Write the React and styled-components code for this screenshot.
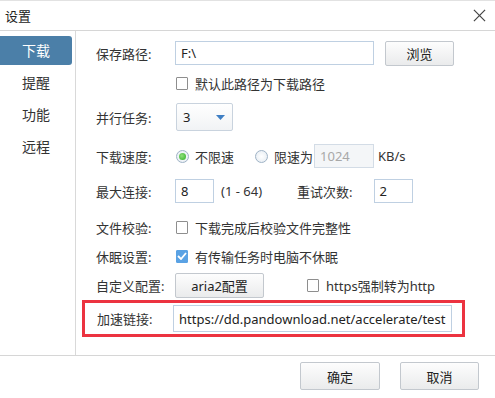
import styled, { createGlobalStyle } from "styled-components"

const GlobalStyle = createGlobalStyle`
  html, body {
    margin: 0;
    padding: 0;
    background: #fff;
  }
  body {
    font-family: "Noto Sans", "Noto Sans CJK SC", sans-serif;
    font-size: 13px;
    color: #333;
  }
  * {
    box-sizing: border-box;
  }
`

const menu = ["下载", "提醒", "功能", "远程"]

const App = () => {
  return (
    <>
      <GlobalStyle />
      <WindowSt>
        <TitleBarSt>
          <span>设置</span>
          <CloseSt viewBox="0 0 14 14">
            <path d="M1 1 L13 13 M13 1 L1 13" stroke="#444" strokeWidth="1.3" />
          </CloseSt>
        </TitleBarSt>
        <BodySt>
          <SideSt>
            {menu.map((item, idx) => (
              <MenuItemSt key={item} $active={idx === 0}>
                <span>{item}</span>
              </MenuItemSt>
            ))}
          </SideSt>
          <MainSt>
            <RowSt $top={10} $h={24}>
              <LabelSt>保存路径:</LabelSt>
              <InputSt $w={199}>F:\</InputSt>
              <ButtonSt $w={69} $ml={11}>浏览</ButtonSt>
            </RowSt>
            <RowSt $top={9} $h={18}>
              <LabelSt />
              <Check />
              <TextSt>默认此路径为下载路径</TextSt>
            </RowSt>
            <RowSt $top={11} $h={28}>
              <LabelSt>并行任务:</LabelSt>
              <SelectSt>
                <span>3</span>
                <svg width="9" height="5" viewBox="0 0 9 5">
                  <path d="M0 0 H9 L4.5 5 Z" fill="#3f7fc4" />
                </svg>
              </SelectSt>
            </RowSt>
            <RowSt $top={13} $h={24}>
              <LabelSt>下载速度:</LabelSt>
              <Radio checked />
              <TextSt>不限速</TextSt>
              <Radio $ml={20} />
              <TextSt>限速为</TextSt>
              <InputSt $w={60} $ml={1} $disabled>1024</InputSt>
              <TextSt $ml={4}>KB/s</TextSt>
            </RowSt>
            <RowSt $top={11} $h={24}>
              <LabelSt>最大连接:</LabelSt>
              <InputSt $w={39}>8</InputSt>
              <TextSt $ml={7}>(1 - 64)</TextSt>
              <TextSt $ml={35}>重试次数:</TextSt>
              <InputSt $w={39} $ml={21}>2</InputSt>
            </RowSt>
            <RowSt $top={15} $h={18}>
              <LabelSt>文件校验:</LabelSt>
              <Check />
              <TextSt>下载完成后校验文件完整性</TextSt>
            </RowSt>
            <RowSt $top={11} $h={18}>
              <LabelSt>休眠设置:</LabelSt>
              <Check checked />
              <TextSt>有传输任务时电脑不休眠</TextSt>
            </RowSt>
            <RowSt $top={7} $h={26}>
              <LabelSt>自定义配置:</LabelSt>
              <ButtonSt $w={89}>aria2配置</ButtonSt>
              <Check $ml={42} />
              <TextSt>https强制转为http</TextSt>
            </RowSt>
            <HighlightSt>
              <LabelSt $w={76}>加速链接:</LabelSt>
              <InputSt $w={279} $h={27}>https://dd.pandownload.net/accelerate/test</InputSt>
            </HighlightSt>
          </MainSt>
        </BodySt>
        <FooterSt>
          <ButtonSt $w={80} $h={28}>确定</ButtonSt>
          <ButtonSt $w={79} $h={28} $ml={20}>取消</ButtonSt>
        </FooterSt>
      </WindowSt>
    </>
  )
}

const Check = ({ checked, $ml }) => (
  <CheckSt $checked={checked} $ml={$ml}>
    {checked && (
      <svg width="10" height="8" viewBox="0 0 10 8">
        <path d="M1 4 L4 7 L9 1" stroke="#fff" strokeWidth="1.8" fill="none" />
      </svg>
    )}
  </CheckSt>
)

const Radio = ({ checked, $ml }) => (
  <RadioSt $checked={checked} $ml={$ml}>
    {checked && <DotSt />}
  </RadioSt>
)

const WindowSt = styled.div`
  width: 495px;
  height: 398px;
  display: flex;
  flex-direction: column;
  border-top: 1px solid #e2e2e2;
  background: #fff;
`
const TitleBarSt = styled.div`
  height: 30px;
  flex-shrink: 0;
  display: flex;
  align-items: center;
  justify-content: space-between;
  padding: 0 9px 0 5px;
  border-bottom: 1px solid #d6d6d6;
  font-size: 13px;
  color: #222;
`
const CloseSt = styled.svg`
  width: 13px;
  height: 13px;
`
const BodySt = styled.div`
  height: 325px;
  flex-shrink: 0;
  display: flex;
  border-bottom: 1px solid #d6d6d6;
`
const SideSt = styled.div`
  width: 76px;
  flex-shrink: 0;
  border-right: 1px solid #d9d9d9;
  padding-top: 3px;
`
const MenuItemSt = styled.div`
  height: 32px;
  display: flex;
  align-items: center;
  span {
    width: 72px;
    height: 29px;
    display: flex;
    align-items: center;
    justify-content: center;
    border-radius: 0 3px 3px 0;
    font-size: 14px;
    background: ${p => (p.$active ? "#4b7fa8" : "transparent")};
    color: ${p => (p.$active ? "#fff" : "#333")};
  }
`
const MainSt = styled.div`
  flex: 1;
  display: flex;
  flex-direction: column;
  padding-left: 20px;
`
const RowSt = styled.div`
  display: flex;
  align-items: center;
  margin-top: ${p => p.$top}px;
  height: ${p => p.$h}px;
`
const LabelSt = styled.div`
  width: ${p => p.$w || 79}px;
  flex-shrink: 0;
  white-space: nowrap;
`
const TextSt = styled.span`
  margin-left: ${p => p.$ml || 0}px;
  white-space: nowrap;
`
const InputSt = styled.div`
  width: ${p => p.$w}px;
  height: ${p => p.$h || 24}px;
  margin-left: ${p => p.$ml || 0}px;
  flex-shrink: 0;
  display: flex;
  align-items: center;
  padding-left: 5px;
  border: 1px solid ${p => (p.$disabled ? "#d3dce6" : "#bfd0e2")};
  background: ${p => (p.$disabled ? "#f4f6f8" : "#fff")};
  color: ${p => (p.$disabled ? "#a8a8a8" : "#222")};
  white-space: nowrap;
  overflow: hidden;
`
const ButtonSt = styled.div`
  width: ${p => p.$w}px;
  height: ${p => p.$h || 25}px;
  margin-left: ${p => p.$ml || 0}px;
  flex-shrink: 0;
  display: flex;
  align-items: center;
  justify-content: center;
  border: 1px solid #c3c8ce;
  border-radius: 2px;
  background: linear-gradient(#fdfdfd, #eaebec);
  color: #222;
`
const SelectSt = styled.div`
  width: 57px;
  height: 28px;
  display: flex;
  align-items: center;
  justify-content: space-between;
  padding: 0 7px 0 6px;
  margin-left: 1px;
  border: 1px solid #c9d3de;
  border-radius: 2px;
  background: linear-gradient(#ffffff, #f1f3f5);
  color: #222;
`
const CheckSt = styled.div`
  width: 12px;
  height: 13px;
  margin-left: ${p => (p.$ml || 0) + 1}px;
  margin-right: 7px;
  flex-shrink: 0;
  display: flex;
  align-items: center;
  justify-content: center;
  border: 1px solid ${p => (p.$checked ? "#5aa2e4" : "#8e8e8e")};
  border-radius: 1px;
  background: ${p => (p.$checked ? "#5aa2e4" : "#fff")};
`
const RadioSt = styled.div`
  width: 13px;
  height: 13px;
  margin-left: ${p => (p.$ml || 0) + 1}px;
  margin-right: 6px;
  flex-shrink: 0;
  display: flex;
  align-items: center;
  justify-content: center;
  border-radius: 50%;
  border: 1px solid #9fb3c6;
  background: radial-gradient(#ffffff, #e3eaf1);
`
const DotSt = styled.div`
  width: 7px;
  height: 7px;
  border-radius: 50%;
  background: radial-gradient(circle at 40% 40%, #8fe07a, #2fae26);
`
const HighlightSt = styled.div`
  width: 383px;
  height: 37px;
  margin-top: 2px;
  margin-left: -14px;
  display: flex;
  align-items: center;
  padding-left: 12px;
  border: 3px solid #ec3340;
`
const FooterSt = styled.div`
  flex: 1;
  display: flex;
  justify-content: flex-end;
  align-items: flex-start;
  padding: 6px 16px 0 0;
`

export default App
